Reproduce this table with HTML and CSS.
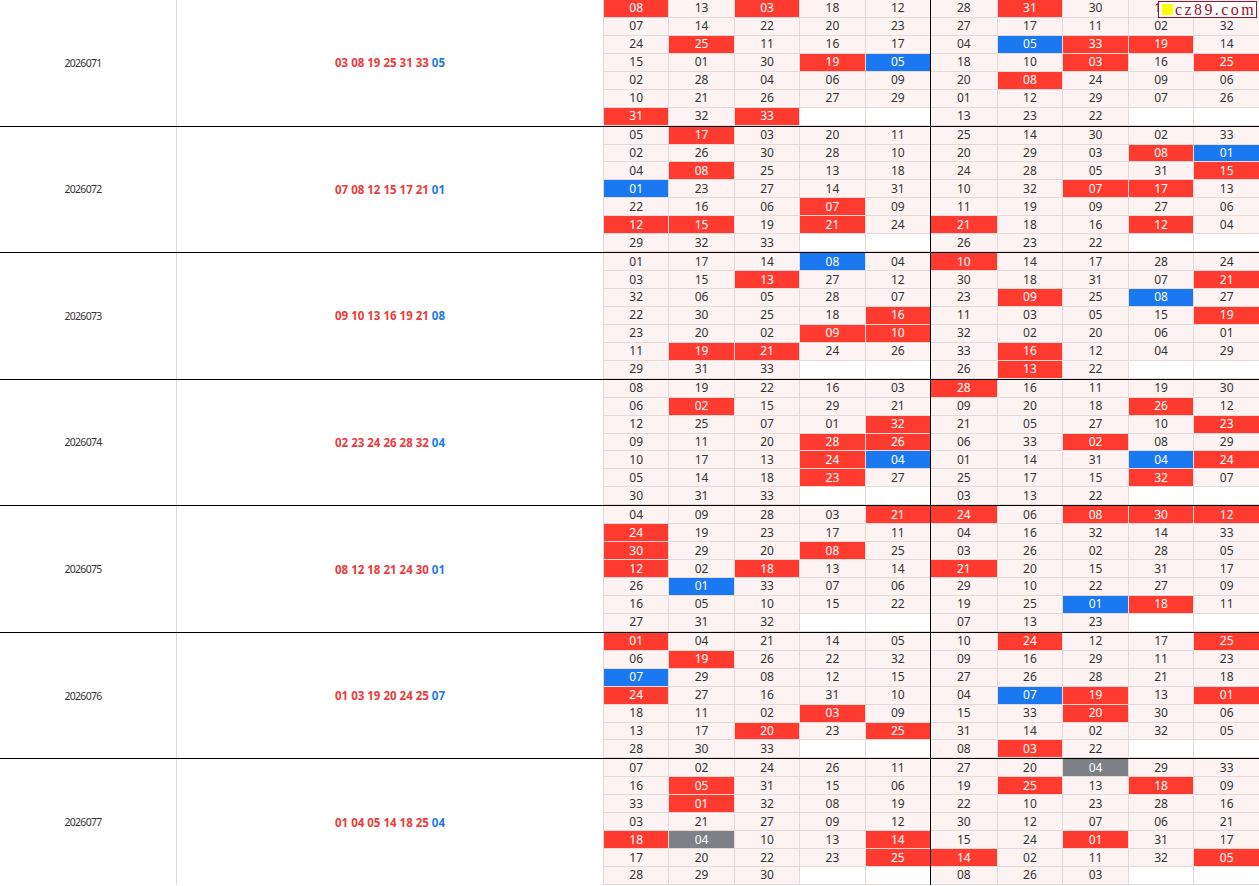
FILE: index.html
```html
<!DOCTYPE html>
<html lang="zh-CN">
<head>
<meta charset="utf-8">
<title>走势图</title>
<link rel="stylesheet" href="styles.css">
</head>
<body>
<div class="watermark"><span class="wm-box"></span>cz89.com</div>
<div class="chart">

<div class="group">
  <div class="period">2026071</div>
  <div class="draw">03 08 19 25 31 33 <em>05</em></div>
  <div class="board">
    <div class="half">
      <span class="r">08</span><span>13</span><span class="r">03</span><span>18</span><span>12</span>
      <span>07</span><span>14</span><span>22</span><span>20</span><span>23</span>
      <span>24</span><span class="r">25</span><span>11</span><span>16</span><span>17</span>
      <span>15</span><span>01</span><span>30</span><span class="r">19</span><span class="b">05</span>
      <span>02</span><span>28</span><span>04</span><span>06</span><span>09</span>
      <span>10</span><span>21</span><span>26</span><span>27</span><span>29</span>
      <span class="r">31</span><span>32</span><span class="r">33</span><span class="e"></span><span class="e"></span>
    </div>
    <div class="half">
      <span>28</span><span class="r">31</span><span>30</span><span>15</span><span>21</span>
      <span>27</span><span>17</span><span>11</span><span>02</span><span>32</span>
      <span>04</span><span class="b">05</span><span class="r">33</span><span class="r">19</span><span>14</span>
      <span>18</span><span>10</span><span class="r">03</span><span>16</span><span class="r">25</span>
      <span>20</span><span class="r">08</span><span>24</span><span>09</span><span>06</span>
      <span>01</span><span>12</span><span>29</span><span>07</span><span>26</span>
      <span>13</span><span>23</span><span>22</span><span class="e"></span><span class="e"></span>
    </div>
  </div>
</div>

<div class="group">
  <div class="period">2026072</div>
  <div class="draw">07 08 12 15 17 21 <em>01</em></div>
  <div class="board">
    <div class="half">
      <span>05</span><span class="r">17</span><span>03</span><span>20</span><span>11</span>
      <span>02</span><span>26</span><span>30</span><span>28</span><span>10</span>
      <span>04</span><span class="r">08</span><span>25</span><span>13</span><span>18</span>
      <span class="b">01</span><span>23</span><span>27</span><span>14</span><span>31</span>
      <span>22</span><span>16</span><span>06</span><span class="r">07</span><span>09</span>
      <span class="r">12</span><span class="r">15</span><span>19</span><span class="r">21</span><span>24</span>
      <span>29</span><span>32</span><span>33</span><span class="e"></span><span class="e"></span>
    </div>
    <div class="half">
      <span>25</span><span>14</span><span>30</span><span>02</span><span>33</span>
      <span>20</span><span>29</span><span>03</span><span class="r">08</span><span class="b">01</span>
      <span>24</span><span>28</span><span>05</span><span>31</span><span class="r">15</span>
      <span>10</span><span>32</span><span class="r">07</span><span class="r">17</span><span>13</span>
      <span>11</span><span>19</span><span>09</span><span>27</span><span>06</span>
      <span class="r">21</span><span>18</span><span>16</span><span class="r">12</span><span>04</span>
      <span>26</span><span>23</span><span>22</span><span class="e"></span><span class="e"></span>
    </div>
  </div>
</div>

<div class="group">
  <div class="period">2026073</div>
  <div class="draw">09 10 13 16 19 21 <em>08</em></div>
  <div class="board">
    <div class="half">
      <span>01</span><span>17</span><span>14</span><span class="b">08</span><span>04</span>
      <span>03</span><span>15</span><span class="r">13</span><span>27</span><span>12</span>
      <span>32</span><span>06</span><span>05</span><span>28</span><span>07</span>
      <span>22</span><span>30</span><span>25</span><span>18</span><span class="r">16</span>
      <span>23</span><span>20</span><span>02</span><span class="r">09</span><span class="r">10</span>
      <span>11</span><span class="r">19</span><span class="r">21</span><span>24</span><span>26</span>
      <span>29</span><span>31</span><span>33</span><span class="e"></span><span class="e"></span>
    </div>
    <div class="half">
      <span class="r">10</span><span>14</span><span>17</span><span>28</span><span>24</span>
      <span>30</span><span>18</span><span>31</span><span>07</span><span class="r">21</span>
      <span>23</span><span class="r">09</span><span>25</span><span class="b">08</span><span>27</span>
      <span>11</span><span>03</span><span>05</span><span>15</span><span class="r">19</span>
      <span>32</span><span>02</span><span>20</span><span>06</span><span>01</span>
      <span>33</span><span class="r">16</span><span>12</span><span>04</span><span>29</span>
      <span>26</span><span class="r">13</span><span>22</span><span class="e"></span><span class="e"></span>
    </div>
  </div>
</div>

<div class="group">
  <div class="period">2026074</div>
  <div class="draw">02 23 24 26 28 32 <em>04</em></div>
  <div class="board">
    <div class="half">
      <span>08</span><span>19</span><span>22</span><span>16</span><span>03</span>
      <span>06</span><span class="r">02</span><span>15</span><span>29</span><span>21</span>
      <span>12</span><span>25</span><span>07</span><span>01</span><span class="r">32</span>
      <span>09</span><span>11</span><span>20</span><span class="r">28</span><span class="r">26</span>
      <span>10</span><span>17</span><span>13</span><span class="r">24</span><span class="b">04</span>
      <span>05</span><span>14</span><span>18</span><span class="r">23</span><span>27</span>
      <span>30</span><span>31</span><span>33</span><span class="e"></span><span class="e"></span>
    </div>
    <div class="half">
      <span class="r">28</span><span>16</span><span>11</span><span>19</span><span>30</span>
      <span>09</span><span>20</span><span>18</span><span class="r">26</span><span>12</span>
      <span>21</span><span>05</span><span>27</span><span>10</span><span class="r">23</span>
      <span>06</span><span>33</span><span class="r">02</span><span>08</span><span>29</span>
      <span>01</span><span>14</span><span>31</span><span class="b">04</span><span class="r">24</span>
      <span>25</span><span>17</span><span>15</span><span class="r">32</span><span>07</span>
      <span>03</span><span>13</span><span>22</span><span class="e"></span><span class="e"></span>
    </div>
  </div>
</div>

<div class="group">
  <div class="period">2026075</div>
  <div class="draw">08 12 18 21 24 30 <em>01</em></div>
  <div class="board">
    <div class="half">
      <span>04</span><span>09</span><span>28</span><span>03</span><span class="r">21</span>
      <span class="r">24</span><span>19</span><span>23</span><span>17</span><span>11</span>
      <span class="r">30</span><span>29</span><span>20</span><span class="r">08</span><span>25</span>
      <span class="r">12</span><span>02</span><span class="r">18</span><span>13</span><span>14</span>
      <span>26</span><span class="b">01</span><span>33</span><span>07</span><span>06</span>
      <span>16</span><span>05</span><span>10</span><span>15</span><span>22</span>
      <span>27</span><span>31</span><span>32</span><span class="e"></span><span class="e"></span>
    </div>
    <div class="half">
      <span class="r">24</span><span>06</span><span class="r">08</span><span class="r">30</span><span class="r">12</span>
      <span>04</span><span>16</span><span>32</span><span>14</span><span>33</span>
      <span>03</span><span>26</span><span>02</span><span>28</span><span>05</span>
      <span class="r">21</span><span>20</span><span>15</span><span>31</span><span>17</span>
      <span>29</span><span>10</span><span>22</span><span>27</span><span>09</span>
      <span>19</span><span>25</span><span class="b">01</span><span class="r">18</span><span>11</span>
      <span>07</span><span>13</span><span>23</span><span class="e"></span><span class="e"></span>
    </div>
  </div>
</div>

<div class="group">
  <div class="period">2026076</div>
  <div class="draw">01 03 19 20 24 25 <em>07</em></div>
  <div class="board">
    <div class="half">
      <span class="r">01</span><span>04</span><span>21</span><span>14</span><span>05</span>
      <span>06</span><span class="r">19</span><span>26</span><span>22</span><span>32</span>
      <span class="b">07</span><span>29</span><span>08</span><span>12</span><span>15</span>
      <span class="r">24</span><span>27</span><span>16</span><span>31</span><span>10</span>
      <span>18</span><span>11</span><span>02</span><span class="r">03</span><span>09</span>
      <span>13</span><span>17</span><span class="r">20</span><span>23</span><span class="r">25</span>
      <span>28</span><span>30</span><span>33</span><span class="e"></span><span class="e"></span>
    </div>
    <div class="half">
      <span>10</span><span class="r">24</span><span>12</span><span>17</span><span class="r">25</span>
      <span>09</span><span>16</span><span>29</span><span>11</span><span>23</span>
      <span>27</span><span>26</span><span>28</span><span>21</span><span>18</span>
      <span>04</span><span class="b">07</span><span class="r">19</span><span>13</span><span class="r">01</span>
      <span>15</span><span>33</span><span class="r">20</span><span>30</span><span>06</span>
      <span>31</span><span>14</span><span>02</span><span>32</span><span>05</span>
      <span>08</span><span class="r">03</span><span>22</span><span class="e"></span><span class="e"></span>
    </div>
  </div>
</div>

<div class="group">
  <div class="period">2026077</div>
  <div class="draw">01 04 05 14 18 25 <em>04</em></div>
  <div class="board">
    <div class="half">
      <span>07</span><span>02</span><span>24</span><span>26</span><span>11</span>
      <span>16</span><span class="r">05</span><span>31</span><span>15</span><span>06</span>
      <span>33</span><span class="r">01</span><span>32</span><span>08</span><span>19</span>
      <span>03</span><span>21</span><span>27</span><span>09</span><span>12</span>
      <span class="r">18</span><span class="g">04</span><span>10</span><span>13</span><span class="r">14</span>
      <span>17</span><span>20</span><span>22</span><span>23</span><span class="r">25</span>
      <span>28</span><span>29</span><span>30</span><span class="e"></span><span class="e"></span>
    </div>
    <div class="half">
      <span>27</span><span>20</span><span class="g">04</span><span>29</span><span>33</span>
      <span>19</span><span class="r">25</span><span>13</span><span class="r">18</span><span>09</span>
      <span>22</span><span>10</span><span>23</span><span>28</span><span>16</span>
      <span>30</span><span>12</span><span>07</span><span>06</span><span>21</span>
      <span>15</span><span>24</span><span class="r">01</span><span>31</span><span>17</span>
      <span class="r">14</span><span>02</span><span>11</span><span>32</span><span class="r">05</span>
      <span>08</span><span>26</span><span>03</span><span class="e"></span><span class="e"></span>
    </div>
  </div>
</div>

</div>
</body>
</html>
```

FILE: styles.css
```css
html {
  scrollbar-width: none;
}

body {
  margin: 0;
  background: #ffffff;
  color: #333333;
  font-family: "Noto Sans", "Liberation Sans", sans-serif;
}

.chart {
  margin-top: -1px;
}

.group {
  display: grid;
  grid-template-columns: 177px 426px 1fr;
  border-top: 1px solid #000000;
}

.period {
  display: flex;
  align-items: center;
  justify-content: center;
  padding-right: 10px;
  border-right: 1px solid #d9d9d9;
  font-family: "Noto Sans", "Liberation Sans", sans-serif;
  font-size: 10.5px;
  letter-spacing: -0.7px;
  color: #333333;
}

.draw {
  display: flex;
  align-items: center;
  justify-content: center;
  font-size: 11.5px;
  font-weight: bold;
  color: #ee3a3a;
  white-space: pre;
}

.draw em {
  font-style: normal;
  color: #1f78e8;
}

.board {
  display: grid;
  grid-template-columns: 1fr 1fr;
}

.half {
  display: grid;
  grid-template-columns: repeat(5, 1fr);
  grid-auto-rows: 17.95px;
}

.half:first-child {
  border-right: 1px solid #000000;
}

.half span {
  display: flex;
  align-items: center;
  justify-content: center;
  background: #fdf3f2;
  border-left: 1px solid #e7d9d8;
  border-bottom: 1px solid #e7d9d8;
  font-size: 12px;
  line-height: 1;
  color: #333333;
}

.half:last-child span:nth-child(5n+1) {
  border-left: none;
}

.half span.r {
  background: #ff3b30;
  color: #ffffff;
}

.half span.b {
  background: #1a78f0;
  color: #ffffff;
}

.half span.g {
  background: #7d8084;
  color: #ffffff;
}

.half span.e {
  background: #ffffff;
}

.watermark {
  position: absolute;
  top: 1px;
  right: 2px;
  display: flex;
  align-items: center;
  gap: 2px;
  height: 15px;
  padding: 0 0 0 3px;
  background: #ffffff;
  border: 1px solid #a0122c;
  font-family: "Liberation Serif", serif;
  font-size: 16px;
  letter-spacing: 2.4px;
  color: #9b0e2c;
}

.wm-box {
  width: 11px;
  height: 11px;
  background: #ffff00;
}
```
